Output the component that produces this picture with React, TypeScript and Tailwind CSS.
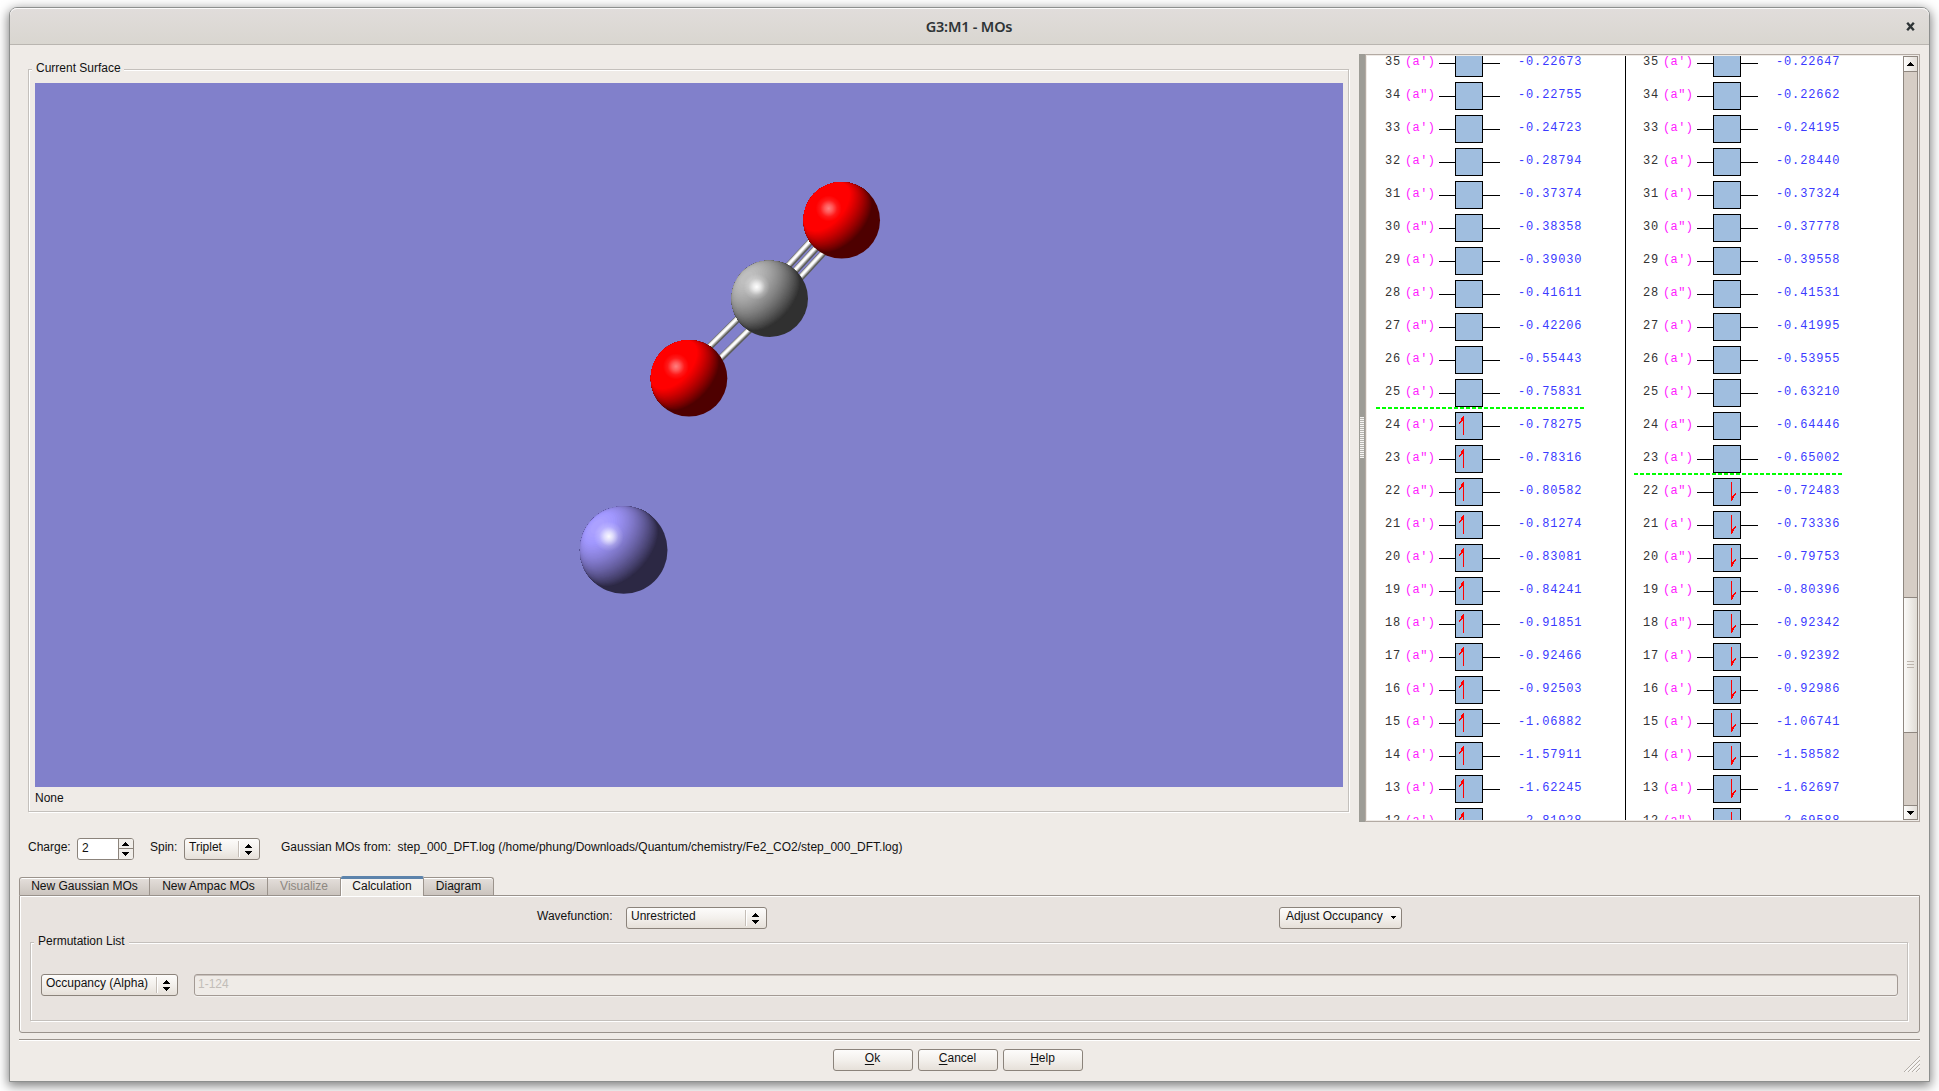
import React from "react";

type Orbital = [n: number, sym: string, energy: string];

const alpha: Orbital[] = [
  [35, "(a')", "-0.22673"],
  [34, "(a\")", "-0.22755"],
  [33, "(a')", "-0.24723"],
  [32, "(a')", "-0.28794"],
  [31, "(a')", "-0.37374"],
  [30, "(a\")", "-0.38358"],
  [29, "(a')", "-0.39030"],
  [28, "(a')", "-0.41611"],
  [27, "(a\")", "-0.42206"],
  [26, "(a')", "-0.55443"],
  [25, "(a')", "-0.75831"],
  [24, "(a')", "-0.78275"],
  [23, "(a\")", "-0.78316"],
  [22, "(a\")", "-0.80582"],
  [21, "(a')", "-0.81274"],
  [20, "(a')", "-0.83081"],
  [19, "(a\")", "-0.84241"],
  [18, "(a')", "-0.91851"],
  [17, "(a\")", "-0.92466"],
  [16, "(a')", "-0.92503"],
  [15, "(a')", "-1.06882"],
  [14, "(a')", "-1.57911"],
  [13, "(a')", "-1.62245"],
  [12, "(a')", "-2.81928"],
];

const beta: Orbital[] = [
  [35, "(a')", "-0.22647"],
  [34, "(a\")", "-0.22662"],
  [33, "(a')", "-0.24195"],
  [32, "(a')", "-0.28440"],
  [31, "(a')", "-0.37324"],
  [30, "(a\")", "-0.37778"],
  [29, "(a')", "-0.39558"],
  [28, "(a\")", "-0.41531"],
  [27, "(a')", "-0.41995"],
  [26, "(a')", "-0.53955"],
  [25, "(a')", "-0.63210"],
  [24, "(a\")", "-0.64446"],
  [23, "(a')", "-0.65002"],
  [22, "(a\")", "-0.72483"],
  [21, "(a')", "-0.73336"],
  [20, "(a\")", "-0.79753"],
  [19, "(a')", "-0.80396"],
  [18, "(a\")", "-0.92342"],
  [17, "(a')", "-0.92392"],
  [16, "(a')", "-0.92986"],
  [15, "(a')", "-1.06741"],
  [14, "(a')", "-1.58582"],
  [13, "(a')", "-1.62697"],
  [12, "(a\")", "-2.69588"],
];

/* ---------- molecule ---------- */

const LEVELS = 48;
const LXY = 0.82;
const LZ = 0.575;

type RGB = [number, number, number];

function Atom({ id, cx, cy, r, ambient, diffuse, spec }: { id: string; cx: number; cy: number; r: number; ambient: RGB; diffuse: RGB; spec: number }) {
  const color = (c: number) =>
    `rgb(${ambient.map((a, i) => Math.min(255, Math.round(a + diffuse[i] * c))).join(",")})`;
  return (
    <g transform={`translate(${cx} ${cy})`}>
      <clipPath id={`clip-${id}`}>
        <circle r={r} />
      </clipPath>
      <radialGradient id={`spec-${id}`}>
        <stop offset="0" stopColor="#fff" stopOpacity={spec} />
        <stop offset="0.3" stopColor="#fff" stopOpacity={spec * 0.7} />
        <stop offset="0.65" stopColor="#fff" stopOpacity={spec * 0.2} />
        <stop offset="1" stopColor="#fff" stopOpacity="0" />
      </radialGradient>
      <circle r={r} fill={color(0)} />
      <g clipPath={`url(#clip-${id})`}>
        <g transform="rotate(222)">
          {Array.from({ length: LEVELS }, (_, i) => {
            const c = i / LEVELS;
            const s = Math.sqrt(1 - c * c);
            const limb = c / LXY;
            return (
              <g key={i} fill={color((i + 0.5) / LEVELS)}>
                {limb < 1 && <rect x={limb * r} y={-r} width={r} height={2 * r} />}
                <ellipse cx={c * LXY * r} rx={LZ * s * r} ry={s * r} />
              </g>
            );
          })}
        </g>
        <circle cx={-0.34 * r} cy={-0.31 * r} r={r * 0.34} fill={`url(#spec-${id})`} />
      </g>
    </g>
  );
}

function Bond({ x1, y1, x2, y2, offsets }: { x1: number; y1: number; x2: number; y2: number; offsets: number[] }) {
  const len = Math.hypot(x2 - x1, y2 - y1);
  const px = -(y2 - y1) / len;
  const py = (x2 - x1) / len;
  const line = (o: number, stroke: string, w: number) => (
    <line x1={x1 + px * o} y1={y1 + py * o} x2={x2 + px * o} y2={y2 + py * o} stroke={stroke} strokeWidth={w} />
  );
  return (
    <>
      {offsets.map((o) => (
        <g key={o}>
          {line(o, "#5c5c5a", 6.8)}
          {line(o - 0.6, "#a0a09d", 5)}
          {line(o - 0.9, "#dcdcda", 3.6)}
          {line(o - 0.9, "#ffffff", 2)}
        </g>
      ))}
    </>
  );
}

function Molecule() {
  const red = { ambient: [78, 0, 0] as RGB, diffuse: [270, 0, 0] as RGB, spec: 0.5 };
  return (
    <svg className="block h-[704px] w-[1308px] bg-[#8180cb]" viewBox="35 83 1308 704">
      <Bond x1={769.7} y1={298.7} x2={841.7} y2={220.3} offsets={[-8.5, 0, 8.5]} />
      <Bond x1={689} y1={378.3} x2={769.7} y2={298.7} offsets={[-8, 8]} />
      <Atom id="o1" cx={841.7} cy={220.3} r={38.3} {...red} />
      <Atom id="c1" cx={769.7} cy={298.7} r={38.3} ambient={[48, 48, 48]} diffuse={[144, 144, 144]} spec={1} />
      <Atom id="o2" cx={689} cy={378.3} r={38.3} {...red} />
      <Atom id="fe" cx={623.7} cy={550} r={43.8} ambient={[44, 40, 68]} diffuse={[128, 122, 204]} spec={0.95} />
    </svg>
  );
}

/* ---------- orbital diagram ---------- */

function Spin({ dir }: { dir: "up" | "down" }) {
  return (
    <svg className="-m-px block size-7" viewBox="0 0 28 28" shapeRendering="crispEdges" fill="#ff0000">
      {dir === "up" ? (
        <>
          <rect x="8" y="4" width="1" height="19" />
          <path d="M9 4 L7 5 L6 8 L4 10 L4 12 L6.5 9.5 L9 9 Z" />
        </>
      ) : (
        <>
          <rect x="18" y="4" width="1" height="19" />
          <path d="M18 23 L20 22 L21 18 L23 16 L22 15 L19.5 17.5 L18 18 Z" />
        </>
      )}
    </svg>
  );
}

function Column({ rows, dir, occupied }: { rows: Orbital[]; dir: "up" | "down"; occupied: number }) {
  return (
    <div className="-mt-[9px] w-[208px]">
      {rows.map(([n, sym, e]) => (
        <div
          key={n}
          className="relative flex h-[33px] items-start pt-[2px] font-['Liberation_Mono',monospace] text-[12px] leading-[27px] tracking-[0.85px]"
        >
          <span className="ml-[9px] w-5 shrink-0 text-[#333]">{n}</span>
          <span className="w-[34px] shrink-0 tracking-[0.4px] text-[#ff1cff]">{sym}</span>
          <span className="mt-[14px] h-px w-4 shrink-0 bg-black" />
          <span className="h-7 w-7 shrink-0 border border-black bg-[#a0bedf]">{n <= occupied && <Spin dir={dir} />}</span>
          <span className="mt-[14px] h-px w-[17px] shrink-0 bg-black" />
          <span className="ml-[18px] text-[#3a3aff]">{e}</span>
          {n === occupied + 1 && (
            <span className="absolute top-[30px] left-0 h-[2px] w-[208px] bg-[repeating-linear-gradient(90deg,#00ff00_0_4px,transparent_4px_6px)]" />
          )}
        </div>
      ))}
    </div>
  );
}

function ScrollBar() {
  return (
    <div className="flex h-[764px] w-[15px] flex-col border-x border-t border-[#8f8780] bg-[#d6cdc5]">
      <div className="flex h-[15px] items-center justify-center border-b border-[#8f8780] bg-gradient-to-r from-[#fdfcfb] to-[#e3ded8]">
        <svg className="h-1 w-[7px]" viewBox="0 0 7 4" shapeRendering="crispEdges"><path d="M3 0h1v1h1v1h1v1h1v1H0V3h1V2h1V1h1z" /></svg>
      </div>
      <div className="mt-[525px] flex h-[136px] flex-col items-center justify-center gap-[2px] border-y border-[#8f8780] bg-gradient-to-r from-[#fbfaf8] to-[#e0dcd6] pb-[2px]">
        <i className="h-px w-[7px] bg-[#bdb5ad]" />
        <i className="h-px w-[7px] bg-[#bdb5ad]" />
        <i className="h-px w-[7px] bg-[#bdb5ad]" />
      </div>
      <div className="mt-auto flex h-[15px] items-center justify-center border-y border-[#8f8780] bg-gradient-to-r from-[#fdfcfb] to-[#e3ded8]">
        <svg className="h-1 w-[7px]" viewBox="0 0 7 4" shapeRendering="crispEdges"><path d="M0 0h7v1H6v1H5v1H4v1H3V3H2V2H1V1H0z" /></svg>
      </div>
    </div>
  );
}

/* ---------- widgets ---------- */

const face =
  "flex h-[22px] items-center rounded-[3px] border border-[#8b837b] bg-gradient-to-b from-[#fdfcfb] via-[#f3f0ec] to-[#e6e0d9] pb-[4px] whitespace-nowrap";

function UpDown() {
  return (
    <svg className="h-[11px] w-[7px]" viewBox="0 0 7 11" shapeRendering="crispEdges">
      <path d="M3 0h1v1h1v1h1v1h1v1H0V3h1V2h1V1h1zM0 7h7v1H6v1H5v1H4v1H3v-1H2V9H1V8H0z" />
    </svg>
  );
}

function Combo({ label, className }: { label: string; className: string }) {
  return (
    <div className={`${face} ${className} justify-between pl-1`}>
      <span>{label}</span>
      <span className="mt-1 flex h-4 w-[21px] items-center border-l border-[#c5beb7] pl-[6px] shadow-[inset_1px_0_0_#fff]">
        <UpDown />
      </span>
    </div>
  );
}

function PushButton({ label }: { label: string }) {
  return (
    <div className={`${face} w-20 justify-center pr-px`}>
      <span className="underline decoration-1 underline-offset-2">{label[0]}</span>
      {label.slice(1)}
    </div>
  );
}

const tab =
  "flex h-[18px] items-center justify-center border-t border-r border-[#9b938c] bg-gradient-to-b from-[#e4dfdb] to-[#cbc4be] pb-[1px] shadow-[inset_0_1px_0_#fff]";

export default function App() {
  return (
    <div className="h-[1091px] w-[1939px] overflow-hidden bg-white pt-[7px] pl-[9px] font-['Liberation_Sans',Arial,sans-serif] text-[12px] leading-[14px] text-[#111]">
      <div className="flex h-[1075px] w-[1921px] flex-col rounded-t-[8px] border border-[#8d8f8e] bg-[#efebe7] shadow-[0_3px_11px_1px_rgba(0,0,0,0.5)]">
        {/* title bar */}
        <div className="flex h-[37px] shrink-0 items-center rounded-t-[7px] border-b border-[#b9b5b0] bg-gradient-to-b from-[#e1dddb] to-[#d9d6d0] shadow-[inset_0_1px_0_#fbfafa]">
          <div className="flex-1 pr-[1px] text-center font-['Noto_Sans',sans-serif] text-[14.5px] font-semibold tracking-[-0.2px] text-[#2e3436]">
            G3:M1 - MOs
          </div>
          <svg className="mr-[14px] -ml-[23px] h-[9px] w-[9px]" viewBox="0 0 9 9">
            <path d="M1.2 0.8 L7.8 8.2 M7.8 0.8 L1.2 8.2" stroke="#2e3436" strokeWidth="2.4" />
          </svg>
        </div>

        {/* viewer and orbital list */}
        <div className="mt-[9px] flex h-[768px] shrink-0 pl-[18px]">
          <div className="mt-[15px] h-[743px] w-[1321px] border border-[#c4c0bc] pl-[6px] shadow-[1px_1px_0_#fff,inset_1px_1px_0_#fff]">
            <div className="-mt-[9px] -ml-[3px] h-[14px] w-[92px] bg-[#efebe7] pl-1">Current Surface</div>
            <div className="mt-2">
              <Molecule />
            </div>
            <div className="mt-1">None</div>
          </div>
          <div className="ml-[10px] flex w-[6px] items-center bg-[#9d9c96]">
            <div className="-mt-px ml-px h-[41px] w-1 bg-[repeating-linear-gradient(180deg,#f7f6f4_0_1px,#b6b4af_1px_2px)]" />
          </div>
          <div className="flex w-[555px] border border-[#b3aaa3] p-px">
            <div className="flex h-[764px] w-[536px] overflow-hidden bg-white pl-[9px]">
              <Column rows={alpha} dir="up" occupied={24} />
              <div className="mr-[8px] ml-[41px] w-px shrink-0 bg-black" />
              <Column rows={beta} dir="down" occupied={22} />
            </div>
            <ScrollBar />
          </div>
        </div>

        {/* charge and spin */}
        <div className="mt-4 flex h-[22px] shrink-0 items-center pl-[18px]">
          <span className="w-[49px] pb-1">Charge:</span>
          <div className="flex h-[22px] w-[57px] overflow-hidden rounded-[3px] border border-[#8b837b] bg-white">
            <span className="flex-1 pt-[2px] pl-1">2</span>
            <span className="flex w-[15px] flex-col border-l border-[#8b837b] bg-[#f1eeea]">
              <span className="flex h-[10px] items-center border-b border-[#8b837b] pl-[3px]">
                <svg className="h-1 w-[7px]" viewBox="0 0 7 4" shapeRendering="crispEdges"><path d="M3 0h1v1h1v1h1v1h1v1H0V3h1V2h1V1h1z" /></svg>
              </span>
              <span className="flex h-[10px] items-center pl-[3px]">
                <svg className="h-1 w-[7px]" viewBox="0 0 7 4" shapeRendering="crispEdges"><path d="M0 0h7v1H6v1H5v1H4v1H3V3H2V2H1V1H0z" /></svg>
              </span>
            </span>
          </div>
          <span className="ml-4 w-[34px] pb-1">Spin:</span>
          <Combo label="Triplet" className="w-[76px]" />
          <span className="ml-[21px] pb-1">Gaussian MOs from:</span>
          <span className="ml-[6.5px] pb-1">step_000_DFT.log (/home/phung/Downloads/Quantum/chemistry/Fe2_CO2/step_000_DFT.log)</span>
        </div>

        {/* tabs */}
        <div className="relative z-10 mt-4 -mb-px flex h-5 shrink-0 items-end pl-[9px] whitespace-nowrap">
          <div className={`${tab} mb-px w-[131px] rounded-tl-[3px] border-l`}>New Gaussian MOs</div>
          <div className={`${tab} mb-px w-[118px]`}>New Ampac MOs</div>
          <div className={`${tab} mb-px w-[73px] text-[#8d8781]`}>Visualize</div>
          <div className="flex h-5 w-[83px] items-center justify-center rounded-t-[2px] border-t-[3px] border-r border-t-[#5c83ab] border-r-[#9b938c] bg-gradient-to-b from-[#f5f2ef] to-[#eeebe6] pb-[4px] shadow-[inset_1px_0_0_#fff]">Calculation</div>
          <div className={`${tab} mb-px w-[70px] rounded-tr-[3px]`}>Diagram</div>
        </div>
        <div className="mr-[9px] ml-[9px] h-[138px] shrink-0 rounded-b-[3px] border border-[#99928c] bg-[#e8e3df] pl-[10px] shadow-[inset_1px_1px_0_#fff]">
          <div className="mt-[11px] flex h-[22px] items-center">
            <span className="ml-[507px] w-[89px] pb-1">Wavefunction:</span>
            <Combo label="Unrestricted" className="w-[141px]" />
            <div className={`${face} ml-[512px] w-[123px] pl-[6px]`}>
              Adjust Occupancy
              <svg className="mt-[3px] ml-[8px] h-[3px] w-[5px]" viewBox="0 0 5 3" shapeRendering="crispEdges"><path d="M0 0h5v1H4v1H3v1H2V2H1V1H0z" /></svg>
            </div>
          </div>
          <div className="mt-[13px] h-[79px] w-[1878px] border border-[#c4c0bc] pl-[10px] shadow-[1px_1px_0_#fff,inset_1px_1px_0_#fff]">
            <div className="-mt-[9px] -ml-[7px] h-[14px] w-[95px] bg-[#e8e3df] pl-1">Permutation List</div>
            <div className="mt-[26px] flex h-[22px]">
              <Combo label="Occupancy (Alpha)" className="w-[137px]" />
              <div className="ml-4 h-[22px] w-[1704px] rounded-[3px] border border-[#a39a94] bg-[#efebe7] pt-[2px] pl-[3px] text-[#c2bdb8] shadow-[inset_0_1px_0_#c9c2bd,0_1px_0_#f3f1ee]">
                1-124
              </div>
            </div>
          </div>
        </div>

        {/* buttons */}
        <div className="mx-[9px] mt-[6px] h-[2px] shrink-0 border-b border-white bg-[#99928c]" />
        <div className="mt-2 flex h-[23px] shrink-0 justify-center gap-[5px] pr-[23px]">
          <PushButton label="Ok" />
          <PushButton label="Cancel" />
          <PushButton label="Help" />
        </div>
        <svg className="-mt-4 mr-[9px] h-4 w-4 self-end" viewBox="0 0 16 16" strokeWidth="1">
          <path d="M0 16 L16 0 M4 16 L16 4 M8 16 L16 8 M12 16 L16 12" stroke="#b3ada7" />
          <path d="M1.5 16 L16 1.5 M5.5 16 L16 5.5 M9.5 16 L16 9.5 M13.5 16 L16 13.5" stroke="#fff" />
        </svg>
      </div>
    </div>
  );
}
